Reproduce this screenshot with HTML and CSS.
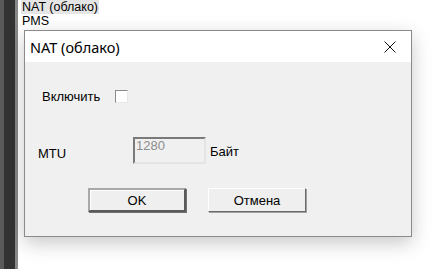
FILE: index.html
```html
<!DOCTYPE html>
<html>
<head>
  <title>NAT (облако)</title>
  <link rel="stylesheet" href="styles.css">
</head>
<body>
  <div class="desktop">
    <div class="side-strip">
      <div class="strip-edge"></div>
      <div class="strip-dark"></div>
      <div class="strip-line"></div>
    </div>

    <div class="tree">
      <div class="tree-item selected">NAT (облако)</div>
      <div class="tree-item">PMS</div>
    </div>

    <!-- NAT dialog window -->
    <div class="dialog">
      <div class="title-bar">
        <span class="title-text">NAT (облако)</span>
        <span class="close-btn">
          <svg width="12" height="12" viewBox="0 0 12 12">
            <path d="M0.5 0.5 L11.5 11.5 M11.5 0.5 L0.5 11.5" stroke="#111" stroke-width="1" fill="none"/>
          </svg>
        </span>
      </div>

      <div class="dialog-body">
        <div class="row enable-row">
          <span class="label">Включить</span>
          <span class="checkbox"></span>
        </div>

        <div class="row mtu-row">
          <span class="label mtu-label">MTU</span>
          <span class="text-input">1280</span>
          <span class="label unit">Байт</span>
        </div>

        <div class="button-row">
          <button class="win-btn default">OK</button>
          <button class="win-btn">Отмена</button>
        </div>
      </div>
    </div>
  </div>
</body>
</html>
```

FILE: styles.css
```css
body {
  margin: 0;
  padding: 0;
  background-color: #fff;
  font-family: "Liberation Sans", Arial, sans-serif;
  overflow: hidden;
}

.desktop {
  position: relative;
  width: 438px;
  height: 269px;
  display: flex;
}

.side-strip {
  display: flex;
  width: 20px;
  height: 100%;
}

.strip-edge {
  width: 4px;
  background-color: #5a5a5a;
}

.strip-dark {
  width: 11px;
  background-color: #333;
}

.strip-line {
  width: 3px;
  background-color: #888;
  margin-right: 2px;
}

.tree {
  display: flex;
  flex-direction: column;
  padding-left: 1px;
}

.tree-item {
  font-size: 12.5px;
  line-height: 14px;
  color: #000;
  padding: 0 1px;
}

.tree-item.selected {
  background-color: #e5e5e5;
}

.dialog {
  position: absolute;
  left: 24px;
  top: 30px;
  width: 386px;
  height: 205px;
  border: 1px solid #8a8a8a;
  background-color: #f0f0f0;
  box-shadow: 0 6px 18px rgba(0, 0, 0, 0.22);
  display: flex;
  flex-direction: column;
}

.title-bar {
  height: 31px;
  background-color: #fff;
  display: flex;
  align-items: center;
  justify-content: space-between;
  padding: 0 15px 0 5px;
}

.title-text {
  font-family: "Noto Sans", sans-serif;
  font-size: 14.5px;
  color: #000;
}

.close-btn {
  display: flex;
  align-items: center;
}

.dialog-body {
  display: flex;
  flex-direction: column;
  padding-top: 28px;
}

.row {
  display: flex;
  align-items: center;
}

.label {
  font-size: 13px;
  color: #000;
}

.enable-row {
  padding-left: 17px;
  height: 13px;
}

.checkbox {
  width: 11px;
  height: 11px;
  margin-left: 15px;
  background-color: #fff;
  border: 1px solid;
  border-color: #8a8a8a #e8e8e8 #e8e8e8 #8a8a8a;
}

.mtu-row {
  padding-left: 13px;
  margin-top: 34px;
  align-items: flex-start;
}

.mtu-label {
  width: 95px;
  margin-top: 9px;
}

.text-input {
  width: 68px;
  height: 23px;
  border: 2px solid;
  border-color: #7a7a7a #e4e4e4 #e4e4e4 #7a7a7a;
  background-color: #f0f0f0;
  color: #8d8d8d;
  font-size: 13px;
  line-height: 14px;
  padding-left: 1px;
}

.unit {
  margin-left: 4px;
  margin-top: 7px;
}

.button-row {
  display: flex;
  gap: 22px;
  padding-left: 63px;
  margin-top: 24px;
}

.win-btn {
  width: 98px;
  height: 24px;
  font-family: "Liberation Sans", Arial, sans-serif;
  font-size: 13px;
  color: #000;
  background-color: #efefef;
  border: 1px solid;
  border-color: #fff #6a6a6a #6a6a6a #fff;
  box-shadow: 1px 1px 0 #a0a0a0;
  padding: 0;
}

.win-btn.default {
  border: 2px solid;
  border-color: #a8a8a8 #5a5a5a #5a5a5a #a8a8a8;
  box-shadow: inset 1px 1px 0 #fff, 1px 1px 0 #707070;
}
```
